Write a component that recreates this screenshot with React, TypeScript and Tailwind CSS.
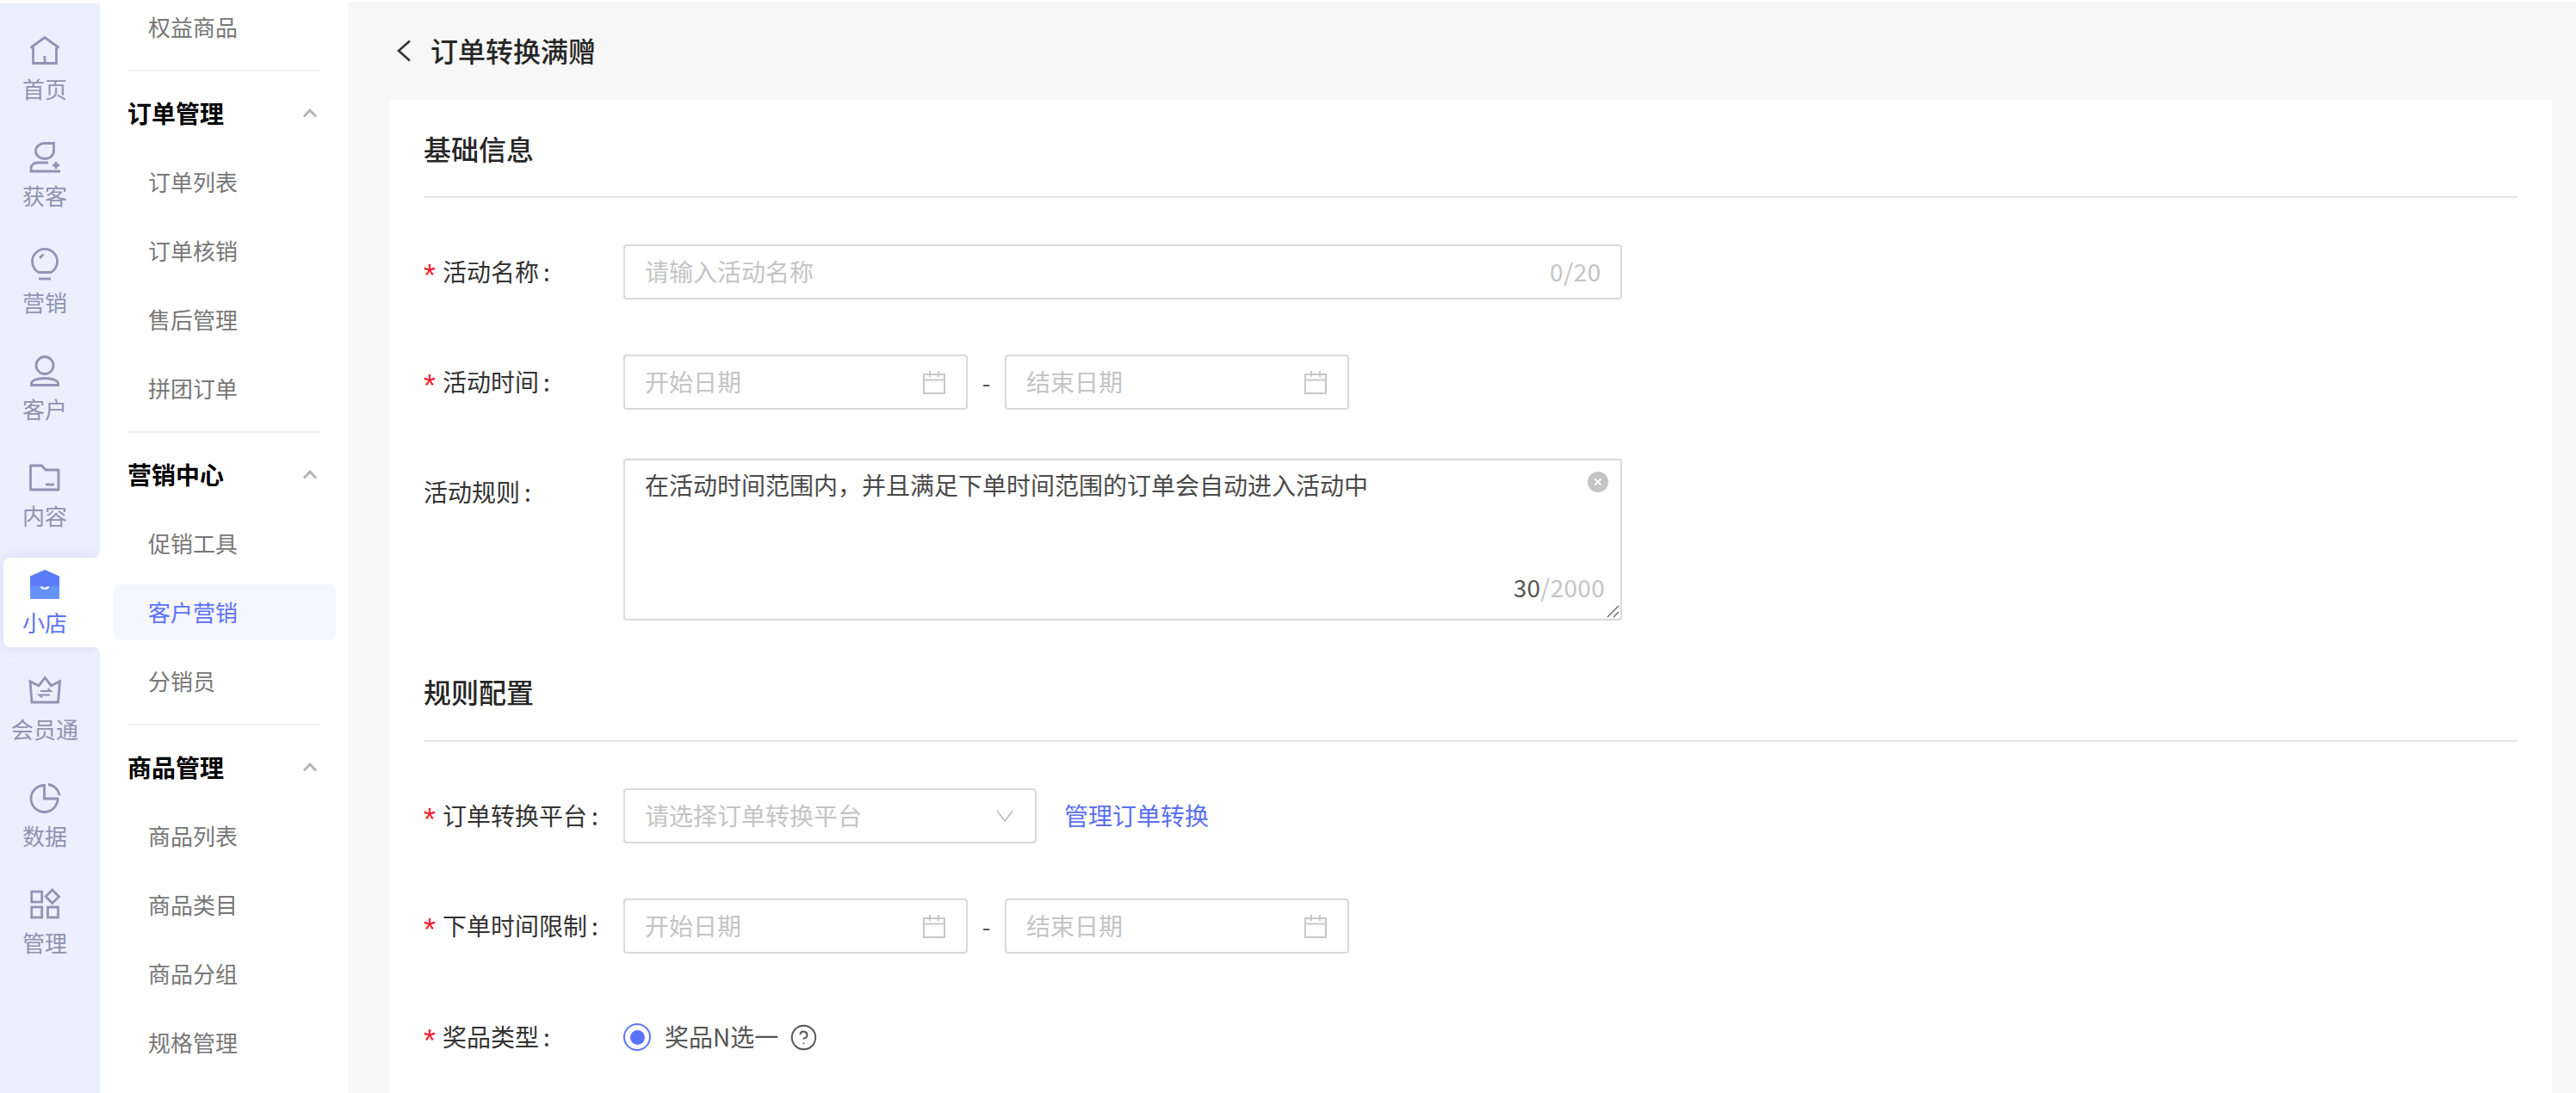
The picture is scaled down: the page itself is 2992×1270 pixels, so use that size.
import type { ReactNode } from 'react'
import { CircleHelp } from 'lucide-react'

const railStroke = '#8f95b3'

function RailSvg({ children }: { children: ReactNode }) {
  return (
    <svg
      width="36"
      height="36"
      viewBox="0 0 36 36"
      fill="none"
      stroke={railStroke}
      strokeWidth="2.8"
      className="overflow-visible"
    >
      {children}
    </svg>
  )
}

const railTop = [
  {
    label: '首页',
    icon: (
      <RailSvg>
        <path d="M4.5 13V31.5H31.5V13M1.5 13.5L18 1.5L34.5 13.5" />
        <path d="M18 23V31.5" />
      </RailSvg>
    ),
  },
  {
    label: '获客',
    icon: (
      <RailSvg>
        <path d="M18 .5H28.5V9.5A10.5 9 0 1 1 18 .5Z" />
        <path d="M22 23H10C5 23 2 26 2 29.5V33H36" />
        <path d="M31 22V30M27 26H35" />
      </RailSvg>
    ),
  },
  {
    label: '营销',
    icon: (
      <RailSvg>
        <path d="M11 26.5A14.5 14.5 0 1 1 25 26.5Z" />
        <path d="M11 34H25" />
        <path d="M12 10L16.5 5.5" />
      </RailSvg>
    ),
  },
  {
    label: '客户',
    icon: (
      <RailSvg>
        <circle cx="18" cy="10.5" r="10" />
        <path d="M2.5 33.5V31.5C2.5 28 10 25.5 18 25.5S33.5 28 33.5 31.5V33.5Z" />
      </RailSvg>
    ),
  },
  {
    label: '内容',
    icon: (
      <RailSvg>
        <path d="M1.5 3H14.5L19 8H34V31H1.5Z" strokeLinejoin="round" />
        <path d="M19 25H29" />
      </RailSvg>
    ),
  },
]

const railBottom = [
  {
    label: '会员通',
    icon: (
      <RailSvg>
        <path d="M1 5.7L11 10.7L18.3 1.5L25.3 10.7L35.5 5.7L33.5 30H3Z" />
        <path d="M13 17H25L21.5 14M24 21.5H11.5L15 24.5" strokeWidth="2" />
      </RailSvg>
    ),
  },
  {
    label: '数据',
    icon: (
      <RailSvg>
        <path d="M17.5 2.5A15.5 15.5 0 1 0 33 18H17.5Z" />
        <path d="M22 1.5A15 15 0 0 1 35 14" />
      </RailSvg>
    ),
  },
  {
    label: '管理',
    icon: (
      <RailSvg>
        <rect x="2.7" y="2" width="12" height="12" />
        <rect x="2.7" y="20" width="12" height="12" />
        <rect x="21.5" y="20" width="12" height="12" />
        <path d="M26.7 0L34.5 7.7L26.7 15.5L19 7.7Z" />
      </RailSvg>
    ),
  },
]

function RailItem({ label, icon }: { label: string; icon: ReactNode }) {
  return (
    <div className="flex h-[104px] flex-col items-center pr-[12px] pt-[14px]">
      <div className="h-[36px] w-[36px]">{icon}</div>
      <span className="mt-[7px] text-[26px] leading-[36px] text-[#8e94b0]">{label}</span>
    </div>
  )
}

function MenuItem({ label, active }: { label: string; active?: boolean }) {
  return (
    <div className="flex h-[80px] items-center px-[16px] pr-[14px]">
      <div
        className={
          active
            ? 'flex h-[64px] w-full items-center rounded-[6px] bg-[#f5f6fe] pb-[1px] pl-[40px] text-[26px] text-[#5b72f7]'
            : 'flex h-[64px] w-full items-center pb-[1px] pl-[40px] text-[26px] text-[#777777]'
        }
      >
        {label}
      </div>
    </div>
  )
}

function MenuGroup({ label }: { label: string }) {
  return (
    <div className="flex h-[80px] items-center justify-between pl-[32px] pr-[36px]">
      <span className="pb-[1px] text-[28px] font-bold text-black">{label}</span>
      <svg width="16" height="11" viewBox="0 0 16 11" fill="none" stroke="#b4b4b4" strokeWidth="2.8">
        <path d="M1 9.5L8 2L15 9.5" />
      </svg>
    </div>
  )
}

function MenuDivider() {
  return <div className="mx-[32px] mb-[8px] mt-[10px] h-[2px] bg-[#f2f2f2]" />
}

function FieldLabel({ text, required }: { text: string; required?: boolean }) {
  return (
    <div className="flex w-[232px] shrink-0 items-center text-[28px] text-[#333333]">
      {required && (
        <span className="h-[46px] w-[22px] pt-[10px] font-['Liberation_Sans',sans-serif] text-[36px] leading-[36px] text-[#f5222d]">
          *
        </span>
      )}
      <span className="pb-[2px]">{text}</span>
      <span className="ml-[5px] pb-[2px]">:</span>
    </div>
  )
}

function CalendarIcon() {
  return (
    <svg width="26" height="28" viewBox="0 0 26 28" fill="none" stroke="#c8c8c8" strokeWidth="2">
      <rect x="1" y="5" width="24" height="22" />
      <path d="M1 11.5H25M8 1V8M18 1V8" />
    </svg>
  )
}

function DateBox({ text }: { text: string }) {
  return (
    <div className="flex h-[64px] w-[400px] items-center justify-between rounded-[4px] border-2 border-[#d9d9d9] pl-[23px] pr-[24px] text-[28px] text-[#c4c4c4]">
      <span className="pb-[2px]">{text}</span>
      <CalendarIcon />
    </div>
  )
}

function DateRange() {
  return (
    <div className="flex items-center">
      <DateBox text="开始日期" />
      <span className="w-[43px] text-center text-[28px] text-[#555555]">-</span>
      <DateBox text="结束日期" />
    </div>
  )
}

function SectionTitle({ text }: { text: string }) {
  return <h2 className="text-[32px] font-medium leading-[40px] text-[#262626]">{text}</h2>
}

export default function App() {
  return (
    <div className="flex h-screen w-screen overflow-hidden bg-white pt-[2px] font-['Noto_Sans_CJK_SC','Liberation_Sans',sans-serif]">
      <aside className="mt-[2px] flex w-[116px] shrink-0 flex-col bg-white">
        <div className="flex flex-col gap-[20px] rounded-br-[8px] bg-[#eceffd] pb-[20px] pt-[24px]">
          {railTop.map((item) => (
            <RailItem key={item.label} {...item} />
          ))}
        </div>
        <div className="bg-[#eceffd] pl-[4px]">
          <div className="relative z-10 flex h-[104px] flex-col items-center rounded-l-[8px] bg-white pr-[16px] pt-[14px] shadow-[0_0_16px_rgba(90,100,200,0.12)]">
            <svg width="36" height="36" viewBox="0 0 36 36" fill="none">
              <path d="M18 0L35 7.5V32.5A1.5 1.5 0 0 1 33.5 34H2.5A1.5 1.5 0 0 1 1 32.5V7.5Z" fill="#5b7cf8" />
              <path d="M1 20C6 17 12 19 18 23C24 19 30 17 35 20V32.5A1.5 1.5 0 0 1 33.5 34H2.5A1.5 1.5 0 0 1 1 32.5Z" fill="#6892fb" />
              <path d="M13.5 19.5C15 22.5 21 22.5 22.5 19.5" stroke="#ffffff" strokeWidth="2.2" />
            </svg>
            <span className="mt-[7px] text-[26px] leading-[36px] text-[#5b72f7]">小店</span>
          </div>
        </div>
        <div className="flex flex-1 flex-col gap-[20px] rounded-tr-[8px] bg-[#eceffd] pt-[20px]">
          {railBottom.map((item) => (
            <RailItem key={item.label} {...item} />
          ))}
        </div>
      </aside>

      <nav className="relative z-20 mt-[2px] w-[288px] shrink-0 overflow-hidden bg-white">
        <div className="-mt-[13px]">
          <MenuItem label="权益商品" />
          <MenuDivider />
          <MenuGroup label="订单管理" />
          <MenuItem label="订单列表" />
          <MenuItem label="订单核销" />
          <MenuItem label="售后管理" />
          <MenuItem label="拼团订单" />
          <MenuDivider />
          <MenuGroup label="营销中心" />
          <MenuItem label="促销工具" />
          <MenuItem label="客户营销" active />
          <MenuItem label="分销员" />
          <MenuDivider />
          <MenuGroup label="商品管理" />
          <MenuItem label="商品列表" />
          <MenuItem label="商品类目" />
          <MenuItem label="商品分组" />
          <MenuItem label="规格管理" />
        </div>
      </nav>

      <main className="flex min-w-0 flex-1 flex-col bg-[#f7f7f7]">
        <header className="flex h-[114px] shrink-0 items-center pl-[56px]">
          <svg width="18" height="26" viewBox="0 0 18 26" fill="none" stroke="#333333" strokeWidth="2.6">
            <path d="M16 1.5L3 13L16 24.5" />
          </svg>
          <span className="ml-[22px] pb-[2px] text-[32px] font-medium text-[#262626]">订单转换满赠</span>
        </header>

        <div className="ml-[48px] mr-[28px] flex-1 bg-white px-[40px] pt-[36px]">
          <SectionTitle text="基础信息" />
          <div className="mt-[36px] h-[2px] bg-[#e5e5e5]" />

          <div className="mt-[54px] flex h-[64px] items-center">
            <FieldLabel text="活动名称" required />
            <div className="flex h-[64px] w-[1160px] items-center justify-between rounded-[4px] border-2 border-[#d9d9d9] pl-[23px] pr-[22px] text-[28px] text-[#c4c4c4]">
              <span className="pb-[2px]">请输入活动名称</span>
              <span className="pb-[2px] tracking-[0.6px]">0/20</span>
            </div>
          </div>

          <div className="mt-[64px] flex h-[64px] items-center">
            <FieldLabel text="活动时间" required />
            <DateRange />
          </div>

          <div className="mt-[57px] flex h-[188px] items-start">
            <div className="flex h-[78px] items-center">
              <FieldLabel text="活动规则" />
            </div>
            <div className="relative h-[188px] w-[1160px] rounded-[4px] border-2 border-[#d9d9d9] pl-[23px] pt-[8px] text-[28px] leading-[40px] text-[#4a4a4a]">
              在活动时间范围内，并且满足下单时间范围的订单会自动进入活动中
              <svg width="24" height="24" viewBox="0 0 24 24" className="absolute right-[14px] top-[13px]">
                <circle cx="12" cy="12" r="12" fill="#c4c4c4" />
                <path d="M8.5 8.5L15.5 15.5M15.5 8.5L8.5 15.5" stroke="#ffffff" strokeWidth="2" />
              </svg>
              <div className="absolute bottom-[17px] right-[18px] leading-[40px] tracking-[0.3px]">
                <span className="text-[#555555]">30</span>
                <span className="text-[#c4c4c4]">/2000</span>
              </div>
              <svg width="16" height="16" viewBox="0 0 16 16" fill="none" stroke="#666666" strokeWidth="1.4" className="absolute bottom-[1px] right-[1px]">
                <path d="M15 2L2 15M15 9L9 15" />
              </svg>
            </div>
          </div>

          <div className="mt-[62px]">
            <SectionTitle text="规则配置" />
          </div>
          <div className="mt-[37px] h-[2px] bg-[#e5e5e5]" />

          <div className="mt-[54px] flex h-[64px] items-center">
            <FieldLabel text="订单转换平台" required />
            <div className="flex h-[64px] w-[480px] items-center justify-between rounded-[4px] border-2 border-[#d9d9d9] pl-[23px] pr-[24px] text-[28px] text-[#c4c4c4]">
              <span className="pb-[2px]">请选择订单转换平台</span>
              <svg width="22" height="14" viewBox="0 0 22 14" fill="none" stroke="#bbbbbb" strokeWidth="1.6">
                <path d="M2 1L11 13L20 1" />
              </svg>
            </div>
            <span className="ml-[32px] pb-[2px] text-[28px] text-[#5b6ef5]">管理订单转换</span>
          </div>

          <div className="mt-[64px] flex h-[64px] items-center">
            <FieldLabel text="下单时间限制" required />
            <DateRange />
          </div>

          <div className="mt-[65px] flex h-[64px] items-center">
            <FieldLabel text="奖品类型" required />
            <div className="flex h-[32px] w-[32px] items-center justify-center rounded-full border-2 border-[#5b72f7]">
              <div className="h-[17px] w-[17px] rounded-full bg-[#5b72f7]" />
            </div>
            <span className="ml-[16px] pb-[2px] text-[28px] text-[#555555]">奖品N选一</span>
            <CircleHelp size={33} strokeWidth={1.4} color="#555555" className="ml-[13px]" />
          </div>
        </div>
      </main>
    </div>
  )
}
